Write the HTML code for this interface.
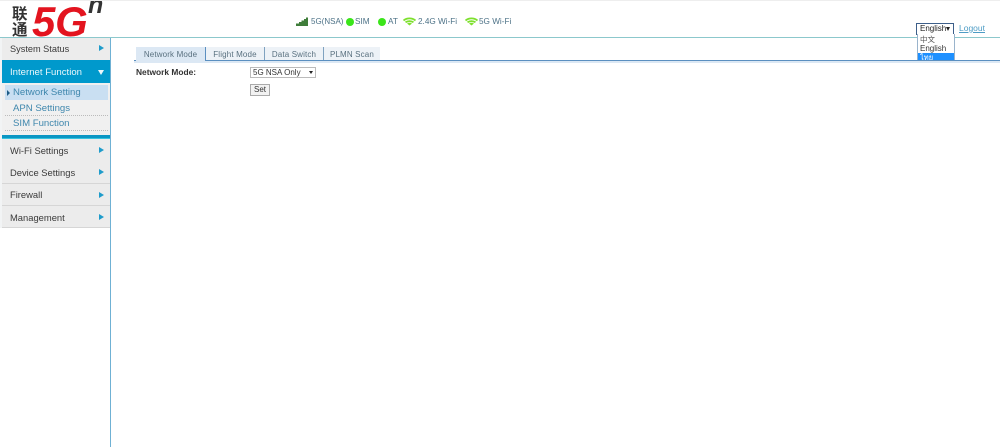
<!DOCTYPE html>
<html><head><meta charset="utf-8">
<style>
html,body{margin:0;padding:0;width:1000px;height:447px;overflow:hidden;background:#fff;font-family:"Liberation Sans","Noto Sans CJK SC",sans-serif;}
div,span,a{position:absolute;white-space:nowrap;}
.t{font-size:8.2px;line-height:12px;color:#4d7287;}
.m{left:2px;width:108px;height:22px;background:#ececec;border-bottom:1px solid #d6d6d6;}
.m span{left:8px;top:1px;font-size:9.4px;line-height:21px;color:#3a3a3a;}
.m i{position:absolute;left:97px;top:7px;width:0;height:0;border-left:5px solid #1f9ccb;border-top:3.5px solid transparent;border-bottom:3.5px solid transparent;}
.s{left:13px;font-size:9.6px;line-height:14px;color:#3f87ad;}
.tab{top:47px;height:13px;background:#edf2f7;border-right:1px solid #7fa2c0;font-size:8px;line-height:15px;color:#59707f;text-align:center;letter-spacing:.15px;}
.g{width:8px;height:8px;border-radius:50%;background:#3be51a;top:18px;}
</style></head><body>

<!-- logo -->
<div style="left:12px;top:6px;width:18px;font-size:15.5px;line-height:15.5px;color:#333;font-family:'Noto Sans CJK SC',sans-serif;font-weight:700;white-space:normal;">联通</div>
<div style="left:32px;top:1px;font-size:42px;line-height:42px;font-weight:bold;font-style:italic;color:#e3141f;letter-spacing:-.2px;">5G</div>
<div style="left:88px;top:-8px;font-size:25px;line-height:26px;font-weight:bold;font-style:italic;color:#333;">n</div>

<!-- header line -->
<div style="left:0;top:37px;width:1000px;height:1px;background:#8cc8cc;"></div>
<div style="left:0;top:0;width:1000px;height:1px;background:#eee;"></div>

<!-- status -->
<svg style="position:absolute;left:296px;top:17px" width="12" height="10"><path d="M0 6.500h3V9H0zM3 5h2.500v4H3zM5.500 3.500H8V9H5.500zM8 2h2v7H8zM10 .5h2V9h-2z" fill="#3f7d3a"/></svg>
<div class="t" style="left:311px;top:16px;font-size:8px;">5G(NSA)</div>
<div class="g" style="left:346px;"></div>
<div class="t" style="left:355px;top:16px;">SIM</div>
<div class="g" style="left:378px;"></div>
<div class="t" style="left:388px;top:16px;">AT</div>
<svg style="position:absolute;left:403px;top:17px" width="13" height="10"><path d="M.5 3.500C4 .7 9 .7 12.500 3.500M2.500 5.300C4.800 3.800 8.200 3.800 10.500 5.300" fill="none" stroke="#7ee02e" stroke-width="1.800"/><path d="M4 6.500C5.500 5.700 7.500 5.700 9 6.500L6.500 8.500z" fill="#7ee02e"/></svg>
<div class="t" style="left:418px;top:16px;">2.4G Wi-Fi</div>
<svg style="position:absolute;left:465px;top:17px" width="13" height="10"><path d="M.5 3.500C4 .7 9 .7 12.500 3.500M2.500 5.300C4.800 3.800 8.200 3.800 10.500 5.300" fill="none" stroke="#7ee02e" stroke-width="1.800"/><path d="M4 6.500C5.500 5.700 7.500 5.700 9 6.500L6.500 8.500z" fill="#7ee02e"/></svg>
<div class="t" style="left:479px;top:16px;">5G Wi-Fi</div>

<!-- language -->
<div style="left:916px;top:23px;width:36px;height:10px;border:1px solid #3d5f8a;background:#fff;font-size:8px;line-height:10px;color:#222;"><span style="left:3px;top:0;">English</span><span style="left:29px;top:3px;width:0;height:0;border-top:4px solid #222;border-left:2.500px solid transparent;border-right:2.500px solid transparent;"></span></div>
<div style="left:917px;top:34px;width:36px;height:28px;border:1px solid #9ab4cc;border-top:0;background:#fff;"></div>
<div style="left:920px;top:35px;font-size:7.500px;line-height:10px;color:#555;">中文</div>
<div style="left:920px;top:44px;font-size:8px;line-height:10px;color:#333;">English</div>
<div style="left:918px;top:53px;width:36px;height:9px;background:#1e90ff;"></div>
<div style="left:920px;top:53px;height:9px;overflow:hidden;font-size:7.500px;line-height:9px;color:#fff;">ไทย</div>
<a style="left:959px;top:22px;font-size:8.500px;line-height:12px;color:#4d9cc5;text-decoration:underline;">Logout</a>

<!-- sidebar -->
<div style="left:110px;top:38px;width:1px;height:409px;background:#6fb1d4;"></div>
<div style="left:0;top:38px;width:2px;height:190px;background:#f2f4f5;"></div>
<div class="m" style="top:38px;height:22px;border:0;"><span style="font-size:9.2px;">System Status</span><i></i></div>
<div style="left:2px;top:60px;width:108px;height:23px;background:#0099cc;">
  <span style="left:8px;top:1px;font-size:9.600px;line-height:23px;color:#eaf7fb;">Internet Function</span>
  <span style="left:96px;top:10px;width:0;height:0;border-top:5px solid #eaf7fb;border-left:3.500px solid transparent;border-right:3.500px solid transparent;"></span>
</div>
<div style="left:2px;top:83px;width:108px;height:52px;background:#f0f0f0;"></div>
<div style="left:5px;top:85px;width:103px;height:15px;background:#c9dff2;"></div>
<div style="left:7px;top:90px;width:0;height:0;border-left:3px solid #1d5c86;border-top:3px solid transparent;border-bottom:3px solid transparent;"></div>
<div class="s" style="top:86px;">Network Setting</div>
<div class="s" style="top:102px;">APN Settings</div>
<div style="left:5px;top:115px;width:103px;border-top:1px dotted #bbb;"></div>
<div class="s" style="top:117px;">SIM Function</div>
<div style="left:5px;top:130px;width:103px;border-top:1px dotted #bbb;"></div>
<div style="left:2px;top:135px;width:108px;height:3px;background:#0a96c4;"></div>
<div style="left:2px;top:138px;width:108px;height:1px;background:#35c3de;"></div>
<div class="m" style="top:139px;height:22px;border:0;"><span style="line-height:22px;">Wi-Fi Settings</span><i style="top:8px;"></i></div>
<div class="m" style="top:161px;height:22px;"><span style="line-height:22px;">Device Settings</span><i style="top:8px;"></i></div>
<div class="m" style="top:184px;height:21px;"><span style="line-height:20px;">Firewall</span><i style="top:8px;"></i></div>
<div class="m" style="top:206px;height:21px;"><span style="top:1px;line-height:22px;">Management</span><i style="top:8px;"></i></div>

<!-- tabs -->
<div style="left:134px;top:60px;width:866px;height:1px;background:#5b8fc0;"></div>
<div style="left:134px;top:61px;width:866px;height:2px;background:#dce8f4;"></div>
<div class="tab" style="left:136px;width:69px;height:14px;top:47px;background:#dce8f4;border-right:1px solid #5b8fc0;">Network Mode</div>
<div class="tab" style="left:206px;width:58px;">Flight Mode</div>
<div class="tab" style="left:265px;width:58px;">Data Switch</div>
<div class="tab" style="left:324px;width:56px;border-right:0;">PLMN Scan</div>

<!-- form -->
<div style="left:136px;top:66px;font-size:8.400px;line-height:12px;font-weight:bold;color:#333;">Network Mode:</div>
<div style="left:250px;top:67px;width:64px;height:9px;border:1px solid #bbb;background:#fff;font-size:8px;line-height:9px;color:#333;"><span style="left:2px;top:0;">5G NSA Only</span><span style="left:58px;top:3px;width:0;height:0;border-top:3.500px solid #222;border-left:2px solid transparent;border-right:2px solid transparent;"></span></div>
<div style="left:250px;top:84px;width:18px;height:10px;border:1px solid #aaa;background:#f2f2f2;font-size:8px;line-height:10px;color:#333;text-align:center;">Set</div>

</body></html>
